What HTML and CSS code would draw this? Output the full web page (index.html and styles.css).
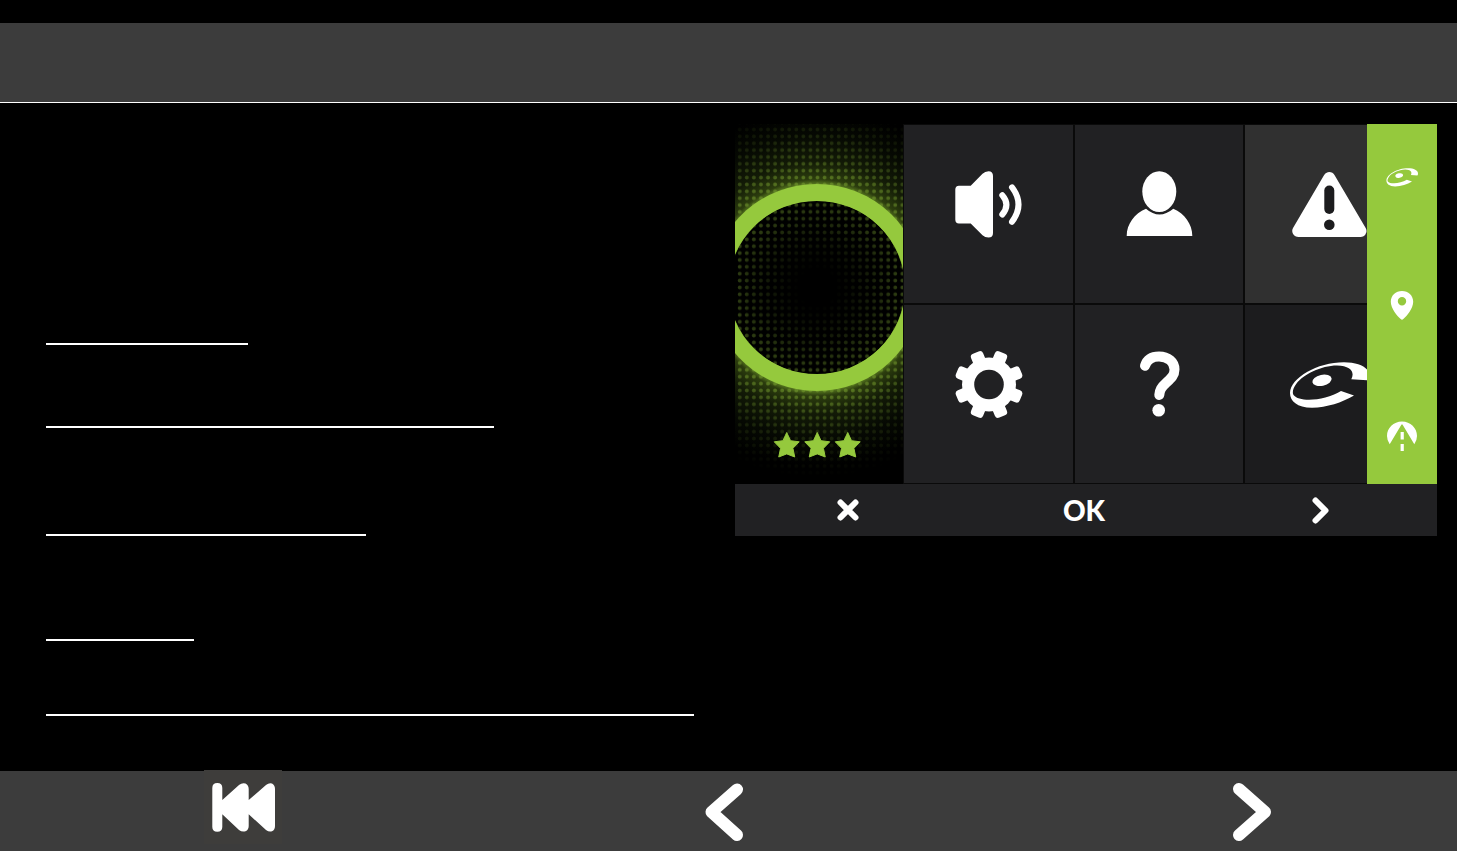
FILE: index.html
```html
<!DOCTYPE html>
<html lang="en">
<head>
    <meta charset="UTF-8">
    <meta name="viewport" content="width=device-width, initial-scale=1.0">
    <title>Menu</title>
    <link rel="stylesheet" href="styles.css">
</head>
<body>
    <header class="topbar"></header>

    <main class="content">
        <section class="notes">
            <hr class="line line-1">
            <hr class="line line-2">
            <hr class="line line-3">
            <hr class="line line-4">
            <hr class="line line-5">
        </section>

        <section class="device">
            <div class="screen">
                <div class="ring">
                    <svg viewBox="0 0 169 360" preserveAspectRatio="xMidYMid slice" aria-hidden="true">
                        <defs>
                            <pattern id="dots" x="1.5" y="2" width="7.07" height="6.87" patternUnits="userSpaceOnUse">
                                <circle cx="3.5" cy="3.4" r="1.9" fill="#6f942c"/>
                            </pattern>
                            <radialGradient id="glow" gradientUnits="userSpaceOnUse" cx="82" cy="163.5" r="190">
                                <stop offset="0.53" stop-color="#6c9428"/>
                                <stop offset="0.57" stop-color="#2c3d0e"/>
                                <stop offset="0.66" stop-color="#131b07"/>
                                <stop offset="0.8" stop-color="#060903"/>
                                <stop offset="0.94" stop-color="#000"/>
                            </radialGradient>
                            <radialGradient id="fadeOut" gradientUnits="userSpaceOnUse" cx="82" cy="163.5" r="190">
                                <stop offset="0.54" stop-color="#fff" stop-opacity="0.7"/>
                                <stop offset="0.68" stop-color="#fff" stop-opacity="0.38"/>
                                <stop offset="0.82" stop-color="#fff" stop-opacity="0.16"/>
                                <stop offset="1" stop-color="#fff" stop-opacity="0"/>
                            </radialGradient>
                            <radialGradient id="fadeIn" gradientUnits="userSpaceOnUse" cx="82" cy="163.5" r="90">
                                <stop offset="0.2" stop-color="#fff" stop-opacity="0"/>
                                <stop offset="0.6" stop-color="#fff" stop-opacity="0.2"/>
                                <stop offset="1" stop-color="#fff" stop-opacity="0.48"/>
                            </radialGradient>
                            <mask id="outer"><rect width="169" height="360" fill="url(#fadeOut)"/></mask>
                            <mask id="inner"><rect width="169" height="360" fill="url(#fadeIn)"/></mask>
                            <path id="star" d="M0-13 3.8-4.8 12.5-3.7 6.2 2.8 8 11.5 0 8.4-8 11.5-6.2 2.8-12.5-3.7-3.8-4.8Z" fill="#95c93d" stroke="#95c93d" stroke-linejoin="round"/>
                        </defs>
                        <rect width="169" height="360" fill="url(#glow)"/>
                        <rect width="169" height="360" fill="url(#dots)" mask="url(#outer)"/>
                        <ellipse cx="82" cy="163.5" rx="88" ry="87" fill="#000"/>
                        <ellipse cx="82" cy="163.5" rx="88" ry="87" fill="url(#dots)" mask="url(#inner)"/>
                        <ellipse cx="82" cy="163.5" rx="97" ry="95" fill="none" stroke="#95c93d" stroke-width="17"/>
                        <use href="#star" x="52" y="321.5"/>
                        <use href="#star" x="82.5" y="321.5"/>
                        <use href="#star" x="113" y="321.5"/>
                    </svg>
                </div>

                <div class="tiles">
                    <button class="tile" aria-label="Volume">
                        <svg viewBox="0 0 80 80">
                            <path fill="#fff" d="M10 21.7H21.7L33.5 9.8Q36 7.3 39.5 7.3 44 7.3 44 12V69Q44 73.6 39.5 73.6 36 73.6 33.5 71.2L21.7 59.4H10Q6.3 59.4 6.3 55.5V25.5Q6.3 21.7 10 21.7Z"/>
                            <path fill="none" stroke="#fff" stroke-width="6" stroke-linecap="round" d="M53.3 31.2Q61.5 40.5 53.3 50.5M63 23.3Q76 40.5 63 57.8"/>
                        </svg>
                    </button>
                    <button class="tile" aria-label="Profile">
                        <svg viewBox="0 0 80 80">
                            <ellipse cx="40.3" cy="27.6" rx="17" ry="20.4" fill="#fff"/>
                            <path fill="#fff" d="M27 44.7Q40.3 56.3 54.3 44.7C65.5 49.5 73.3 60 73.3 71.9H7.700C7.700 60 15.500 49.500 27 44.700Z"/>
                        </svg>
                    </button>
                    <button class="tile tile-active" aria-label="Alerts">
                        <svg viewBox="0 0 80 80">
                            <path fill="#fff" stroke="#fff" stroke-width="12" stroke-linejoin="round" d="M40.3 14 71.5 67H9.2Z"/>
                            <path stroke="#1c1c1e" stroke-width="10" stroke-linecap="round" d="M40.3 26.500V45"/>
                            <circle cx="40.3" cy="60.7" r="5.3" fill="#1c1c1e"/>
                        </svg>
                    </button>
                    <button class="tile" aria-label="Settings">
                        <svg viewBox="0 0 80 80">
                            <g transform="translate(40 40.5)" fill="#fff">
                                <rect x="-6.5" y="-34.500" width="13" height="69" rx="3.5" transform="rotate(22.5)"/>
                                <rect x="-6.5" y="-34.500" width="13" height="69" rx="3.5" transform="rotate(67.5)"/>
                                <rect x="-6.5" y="-34.500" width="13" height="69" rx="3.5" transform="rotate(112.5)"/>
                                <rect x="-6.5" y="-34.500" width="13" height="69" rx="3.5" transform="rotate(157.5)"/>
                                <circle r="27"/>
                                <circle r="14.8" fill="#212123"/>
                            </g>
                        </svg>
                    </button>
                    <button class="tile" aria-label="Help">
                        <svg viewBox="0 0 80 80">
                            <path fill="none" stroke="#fff" stroke-width="10" stroke-linecap="round" d="M26 21.7C28 15.5 33 12.5 40 12.5 49 12.5 55.5 18 55.5 25.5 55.5 31 52.5 34 47.5 38.5 42 43.5 40.8 46 40.3 51"/>
                            <circle cx="39.7" cy="66.3" r="6.3" fill="#fff"/>
                        </svg>
                    </button>
                    <button class="tile tile-dark" aria-label="Navigation">
                        <svg viewBox="0 0 80 80">
                            <g id="swirl" fill="#fff">
                                <path d="M62.300 35.300C66 28 62 22 48 21.500 32 21.500 14 31 7.700 39.300 4 44 3 48.500 4.500 51 10 58.500 36 57 52 47L65 51.500C53 58.500 38 63.500 23 63.700 8 63.700 1 57 1 49 1.500 34 28 18.300 55 18.300 70 18.300 80 23.500 80 31Q80 34 78.500 36.300Z"/>
                                <ellipse cx="33" cy="36.3" rx="9.8" ry="5.5" transform="rotate(-12 33 36.3)"/>
                            </g>
                        </svg>
                    </button>
                </div>

                <nav class="strip">
                    <button aria-label="Route">
                        <svg viewBox="0 0 80 80"><use href="#swirl"/></svg>
                    </button>
                    <button aria-label="Place">
                        <svg viewBox="0 0 32 32">
                            <path fill="#fff" fill-rule="evenodd" d="M16 0C22.300 0 27.200 4.500 27.200 10.800 27.200 17.500 20.500 25.500 17.300 28Q16 29.300 14.700 28C11.500 25.500 4.800 17.500 4.800 10.800 4.800 4.500 9.700 0 16 0ZM16 6A4.200 4.200 0 1 0 16 14.400 4.200 4.200 0 1 0 16 6Z"/>
                        </svg>
                    </button>
                    <button aria-label="Road">
                        <svg viewBox="0 0 32 32">
                            <path fill="#fff" d="M16 1.500C24.500 1.500 31 8 31 16Q31 20.500 28.300 24.200L16.500 4.500H15.500L3.700 24.200Q1 20.500 1 16C1 8 7.500 1.500 16 1.500Z"/>
                            <path stroke="#fff" stroke-width="3.200" d="M16.200 12V19.500M16.200 24V31"/>
                        </svg>
                    </button>
                </nav>
            </div>

            <div class="keys">
                <button aria-label="Close">
                    <svg viewBox="0 0 28 28"><path d="M6.500 6.500 21.500 21.500M21.500 6.500 6.500 21.500"/></svg>
                </button>
                <button>OK</button>
                <button aria-label="More">
                    <svg viewBox="0 0 28 28"><path d="M7.500 4.500 17.500 14.500 7.500 24.500"/></svg>
                </button>
            </div>
        </section>
    </main>

    <footer class="pager">
        <div>
            <button class="first" aria-label="First page">
                <svg viewBox="0 0 78 74">
                    <path fill="#fff" d="M8.300 18Q8.300 13 13.300 13 18.300 13 18.300 18V30L35 15Q38 12.500 41.500 13.500 44.700 15 44.700 19V30L62 15Q65 12.500 68 13.500 71 15 71 19V56Q71 60 68 61.300 65 62.300 62 60L44.700 44.300V56Q44.700 60 41.500 61.300 38 62.300 35 60L18.300 44.300V57Q18.300 61.800 13.300 61.800 8.300 61.800 8.300 57Z"/>
                </svg>
            </button>
        </div>
        <div>
            <button aria-label="Previous page">
                <svg viewBox="0 0 80 80"><path class="chevron" d="M53 18.500 27.500 41 53 64"/></svg>
            </button>
        </div>
        <div>
            <button aria-label="Next page">
                <svg viewBox="0 0 80 80"><path class="chevron" d="M27 18 53 41 27 64"/></svg>
            </button>
        </div>
    </footer>
</body>
</html>
```
FILE: styles.css
```css
* {
    box-sizing: border-box;
}

body {
    margin: 0;
    padding-top: 23px;
    min-height: 100vh;
    display: flex;
    flex-direction: column;
    background-color: #000;
    font-family: Lato, "Open Sans", sans-serif;
}

button {
    display: flex;
    align-items: center;
    justify-content: center;
    margin: 0;
    padding: 0;
    border: none;
    background: none;
    color: #fff;
    font: inherit;
    cursor: pointer;
}

svg {
    display: block;
}

.topbar {
    height: 80px;
    background-color: #3c3c3c;
    border-bottom: 1px solid #fff;
}

.content {
    flex: 1;
    display: grid;
    grid-template-columns: 735fr 722fr;
    align-items: start;
}

/* left column */
.notes {
    padding: 240px 0 0 46px;
}

.line {
    height: 2px;
    margin: 0;
    border: none;
    background-color: #fff;
}

.line-1 {
    width: 202px;
    margin-bottom: 81px;
}

.line-2 {
    width: 448px;
    margin-bottom: 106px;
}

.line-3 {
    width: 320px;
    margin-bottom: 103px;
}

.line-4 {
    width: 148px;
    margin-bottom: 73px;
}

.line-5 {
    width: 648px;
}

/* device preview */
.device {
    padding: 21px 20px 0 0;
}

.screen {
    display: flex;
    aspect-ratio: 702 / 360;
}

.ring {
    width: 24%;
    overflow: hidden;
}

.ring svg {
    width: 100%;
    height: 100%;
}

.tiles {
    flex: 1;
    overflow: hidden;
    display: grid;
    grid-template-columns: repeat(3, 36.4%);
    grid-template-rows: 1fr 1fr;
    gap: 2px;
    padding: 1px 0 1px 1px;
    background-color: #0a0a0a;
}

.tile {
    padding-bottom: 20px;
    background-color: #212123;
}

.tile svg {
    width: 80px;
    height: 80px;
}

.tile-active {
    background-color: #303030;
}

.tile-dark {
    background-color: #1c1c1e;
}

.strip {
    width: 10%;
    display: flex;
    flex-direction: column;
    align-items: center;
    justify-content: space-between;
    padding: 37px 0 32px;
    background-color: #95c93d;
}

.strip svg {
    width: 32px;
    height: 32px;
}

.keys {
    display: grid;
    grid-template-columns: 226fr 246fr 230fr;
    height: 52px;
    background-color: #212123;
    font-size: 28px;
    font-weight: 900;
}

.keys svg {
    width: 28px;
    height: 28px;
    fill: none;
    stroke: #fff;
    stroke-width: 6;
    stroke-linecap: round;
    stroke-linejoin: round;
}

/* bottom navigation */
.pager {
    display: grid;
    grid-template-columns: 486fr 476fr 495fr;
    height: 80px;
    background-color: #3c3c3c;
}

.pager div {
    display: flex;
    align-items: flex-start;
    justify-content: center;
}

.pager div:last-child {
    padding-left: 85px;
}

.pager svg {
    width: 80px;
    height: 80px;
}

.pager .first {
    margin-top: -1px;
    background-color: #3e3d3b;
}

.pager .first svg {
    width: 78px;
    height: 74px;
}

.chevron {
    fill: none;
    stroke: #fff;
    stroke-width: 12;
    stroke-linecap: round;
    stroke-linejoin: round;
}
```
